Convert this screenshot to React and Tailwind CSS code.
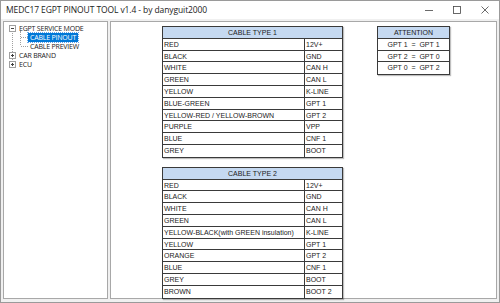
import React from 'react';

const cable1 = [
  ['RED', '12V+'],
  ['BLACK', 'GND'],
  ['WHITE', 'CAN H'],
  ['GREEN', 'CAN L'],
  ['YELLOW', 'K-LINE'],
  ['BLUE-GREEN', 'GPT 1'],
  ['YELLOW-RED / YELLOW-BROWN', 'GPT 2'],
  ['PURPLE', 'VPP'],
  ['BLUE', 'CNF 1'],
  ['GREY', 'BOOT'],
];

const cable2 = [
  ['RED', '12V+'],
  ['BLACK', 'GND'],
  ['WHITE', 'CAN H'],
  ['GREEN', 'CAN L'],
  ['YELLOW-BLACK(with GREEN insulation)', 'K-LINE'],
  ['YELLOW', 'GPT 1'],
  ['ORANGE', 'GPT 2'],
  ['BLUE', 'CNF 1'],
  ['GREY', 'BOOT'],
  ['BROWN', 'BOOT 2'],
];

const attention = ['GPT 1  =  GPT 1', 'GPT 2  =  GPT 0', 'GPT 0  =  GPT 2'];

function CableTable({ title, rows }) {
  return (
    <div className="w-[181px] border border-[#3a3a3a] bg-white shadow-[1px_1px_1px_rgba(0,0,0,0.25)]">
      <div className="h-[11.8px] bg-[#c5d9f1] border-b border-[#3a3a3a] text-center leading-[11px]">{title}</div>
      {rows.map(([color, pin], i) => (
        <div key={i} className={`flex h-[11.8px] leading-[11px] ${i < rows.length - 1 ? 'border-b border-[#3a3a3a]' : ''}`}>
          <div className="w-[142px] border-r border-[#3a3a3a] pl-[1px] whitespace-nowrap overflow-hidden">{color}</div>
          <div className="flex-1 pl-[1px] whitespace-nowrap">{pin}</div>
        </div>
      ))}
    </div>
  );
}

function Expander({ open }) {
  return (
    <div className="w-[7px] h-[7px] border border-[#a0a0a0] bg-white flex items-center justify-center relative shrink-0">
      <div className="absolute w-[3px] h-px bg-[#404040]" />
      {!open && <div className="absolute w-px h-[3px] bg-[#404040]" />}
    </div>
  );
}

export default function App() {
  return (
    <div className="w-[500px] h-[303px] bg-[#f0f0f0] border border-[#9a9a9a] flex flex-col overflow-hidden text-[#111]" style={{ fontFamily: '"Liberation Sans", Arial, sans-serif' }}>
      {/* title bar */}
      <div className="h-[18px] bg-white flex items-center shrink-0">
        <div className="pl-[5px] text-[8.5px] tracking-[-0.1px] text-[#222] flex-1" style={{ fontFamily: '"Open Sans", sans-serif' }}>MEDC17 EGPT PINOUT TOOL v1.4 - by danyguit2000</div>
        <div className="flex items-center">
          <div className="w-[28px] flex justify-center">
            <svg width="8" height="8" viewBox="0 0 8 8"><line x1="0" y1="4.5" x2="8" y2="4.5" stroke="#444" strokeWidth="0.8" /></svg>
          </div>
          <div className="w-[28px] flex justify-center">
            <svg width="8" height="8" viewBox="0 0 8 8"><rect x="0.5" y="0.5" width="7" height="7" fill="none" stroke="#444" strokeWidth="0.8" /></svg>
          </div>
          <div className="w-[28px] flex justify-center">
            <svg width="8" height="8" viewBox="0 0 8 8"><path d="M0.5 0.5 L7.5 7.5 M7.5 0.5 L0.5 7.5" stroke="#444" strokeWidth="0.8" /></svg>
          </div>
        </div>
      </div>

      {/* body */}
      <div className="flex-1 flex gap-[2px] px-[2px] pt-[2px] pb-[3px] min-h-0">
        {/* tree */}
        <div className="w-[105px] bg-white border border-[#a8a8a8] text-[7px] tracking-[-0.2px] leading-[9px] pt-[2px] relative text-[#222]" style={{ fontFamily: '"Open Sans", sans-serif' }}>
          <div className="absolute left-[8px] top-[9px] h-[37px] border-l border-dotted border-[#a0a0a0]" />
          <div className="absolute left-[16px] top-[9px] h-[14px] border-l border-dotted border-[#a0a0a0]" />
          <div className="flex items-center gap-[3px] pl-[5px] h-[9px]">
            <Expander open />
            <span>EGPT SERVICE MODE</span>
          </div>
          <div className="flex items-center pl-[17px] h-[9px]">
            <div className="w-[7px] border-t border-dotted border-[#a0a0a0]" />
            <span className="bg-[#0078d7] text-white px-[2px] h-[9px] outline outline-1 outline-dotted outline-[#6aa6e6]">CABLE PINOUT</span>
          </div>
          <div className="flex items-center pl-[17px] h-[9px]">
            <div className="w-[7px] border-t border-dotted border-[#a0a0a0]" />
            <span className="px-[2px]">CABLE PREVIEW</span>
          </div>
          <div className="flex items-center gap-[3px] pl-[5px] h-[9px]">
            <Expander />
            <span>CAR BRAND</span>
          </div>
          <div className="flex items-center gap-[3px] pl-[5px] h-[9px]">
            <Expander />
            <span>ECU</span>
          </div>
        </div>

        {/* content */}
        <div className="flex-1 bg-white border border-[#a8a8a8] pl-[51px] pt-[4px] flex gap-[34px] text-[7px] text-[#222]">
          <div className="flex flex-col gap-[9px]">
            <CableTable title="CABLE TYPE 1" rows={cable1} />
            <CableTable title="CABLE TYPE 2" rows={cable2} />
          </div>
          <div className="self-start w-[73px] border border-[#3a3a3a] bg-white shadow-[1px_1px_1px_rgba(0,0,0,0.25)]">
            <div className="h-[11.8px] bg-[#c5d9f1] border-b border-[#3a3a3a] text-center leading-[11px]">ATTENTION</div>
            {attention.map((t, i) => (
              <div key={i} className={`h-[11.8px] leading-[11px] text-center whitespace-pre ${i < attention.length - 1 ? 'border-b border-[#3a3a3a]' : ''}`}>{t}</div>
            ))}
          </div>
        </div>
      </div>
    </div>
  );
}
